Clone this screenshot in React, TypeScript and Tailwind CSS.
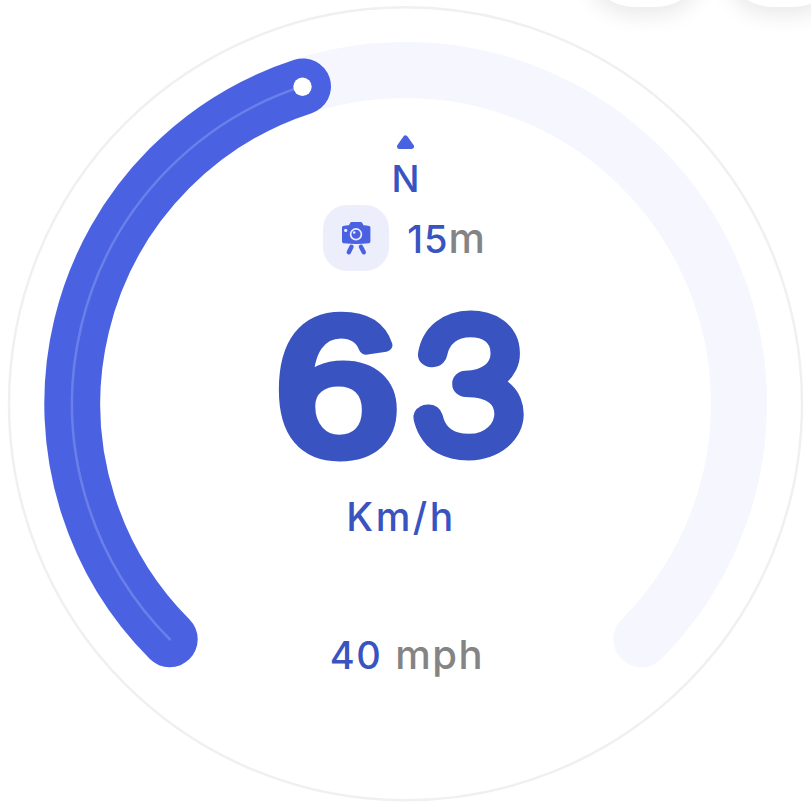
function TripodCamera() {
  return (
    <svg width="34" height="36" viewBox="0 0 34 36" fill="#4a61e2">
      <path d="M12.600 2h9.200c.6 0 1 .2 1.300.7l1.400 2.600c2 .1 3.900.4 5.600.8.800.2 1.300.8 1.300 1.500v13.600c0 1.200-.8 2-2 2.100-3.800.5-7.800.8-12 .8s-8.200-.3-12.400-.8c-1.200-.1-2-.9-2-2.100V7.600c0-.7.500-1.300 1.300-1.500 1.700-.4 3.600-.7 5.600-.8l1.400-2.600c.3-.5.7-.7 1.300-.7z" />
      <circle cx="17" cy="14.300" r="5.400" stroke="#eceefc" strokeWidth="1.700" />
      <circle cx="15.200" cy="12.500" r="1.300" fill="#eceefc" />
      <circle cx="6.700" cy="10.400" r="1.600" fill="#eceefc" />
      <path d="M12.500 26.800L9.800 32.300M21.900 26.800L24.800 32.300" stroke="#4a61e2" strokeWidth="4.400" strokeLinecap="round" />
    </svg>
  );
}

function Dial() {
  return (
    <svg className="absolute inset-0" width="811" height="810" viewBox="0 0 811 810" fill="none">
      <circle cx="405.5" cy="403.8" r="396.500" stroke="#f0f0f0" strokeWidth="2.500" />
      <path d="M169.700 639.300A333.500 333.500 0 1 1 641.300 639.300" stroke="#f5f6fe" strokeWidth="56" strokeLinecap="round" />
      <path d="M169.700 639.300A333.500 333.500 0 0 1 303 86.500" stroke="#4a61e2" strokeWidth="56" strokeLinecap="round" />
      <path d="M170.500 640A333.500 333.500 0 0 1 302.500 86.300" stroke="#6b7fe9" strokeWidth="2.500" />
      <circle cx="302.500" cy="86.700" r="9.200" fill="#fff" />
    </svg>
  );
}

function Speed() {
  return (
    <svg className="-mt-[15px] -mb-[30px]" width="260" height="245" viewBox="0 -45 260 245">
      <g fill="#3954c0" stroke="#3954c0" strokeLinejoin="round">
        <text
          transform="translate(-1 152) scale(1.15 1)"
          vectorEffect="non-scaling-stroke"
          fontFamily="'Liberation Sans', sans-serif"
          fontSize="194"
          strokeWidth="14"
        >
          6
        </text>
        <text
          transform="translate(138.500 145.500) scale(1.09 1)"
          vectorEffect="non-scaling-stroke"
          fontFamily="Lato, sans-serif"
          fontWeight="100"
          fontSize="174"
          strokeWidth="26"
        >
          3
        </text>
      </g>
    </svg>
  );
}

export default function App() {
  return (
    <main className="relative h-[810px] w-[811px] overflow-hidden bg-white font-[Inter,sans-serif] text-[38px] leading-[44px] font-medium text-[#3954c0]">
      <div className="absolute -top-[93px] left-[585px] h-[100px] w-[120px] rounded-[50px] bg-white shadow-[0_8px_22px_rgba(0,0,0,0.09)]" />
      <div className="absolute -top-[93px] left-[723px] h-[100px] w-[120px] rounded-[50px] bg-white shadow-[0_8px_22px_rgba(0,0,0,0.09)]" />
      <Dial />
      <section className="relative flex flex-col items-center pt-[135px]">
        <svg width="20" height="15" viewBox="0 0 20 15">
          <path d="M9.500 3L15.500 11.500H3.500z" fill="#4a61e2" stroke="#4a61e2" strokeWidth="5" strokeLinejoin="round" />
        </svg>
        <div className="mt-[7px] text-[37px]">N</div>
        <div className="mt-1 mr-[2px] flex items-center gap-[18px]">
          <div className="flex size-[66px] items-center justify-center rounded-[24px] bg-[#eceefc]">
            <TripodCamera />
          </div>
          <div className="tracking-[1px]">
            15<span className="text-[41px] text-[#848484]">m</span>
          </div>
        </div>
        <Speed />
        <div className="mt-[24px] mr-[9px] text-[39px] tracking-[2.500px]">Km/h</div>
        <div className="mt-[94px] ml-[3px] flex gap-[13px] tracking-[1.500px]">
          40<span className="text-[40px] text-[#848484]">mph</span>
        </div>
      </section>
    </main>
  );
}
